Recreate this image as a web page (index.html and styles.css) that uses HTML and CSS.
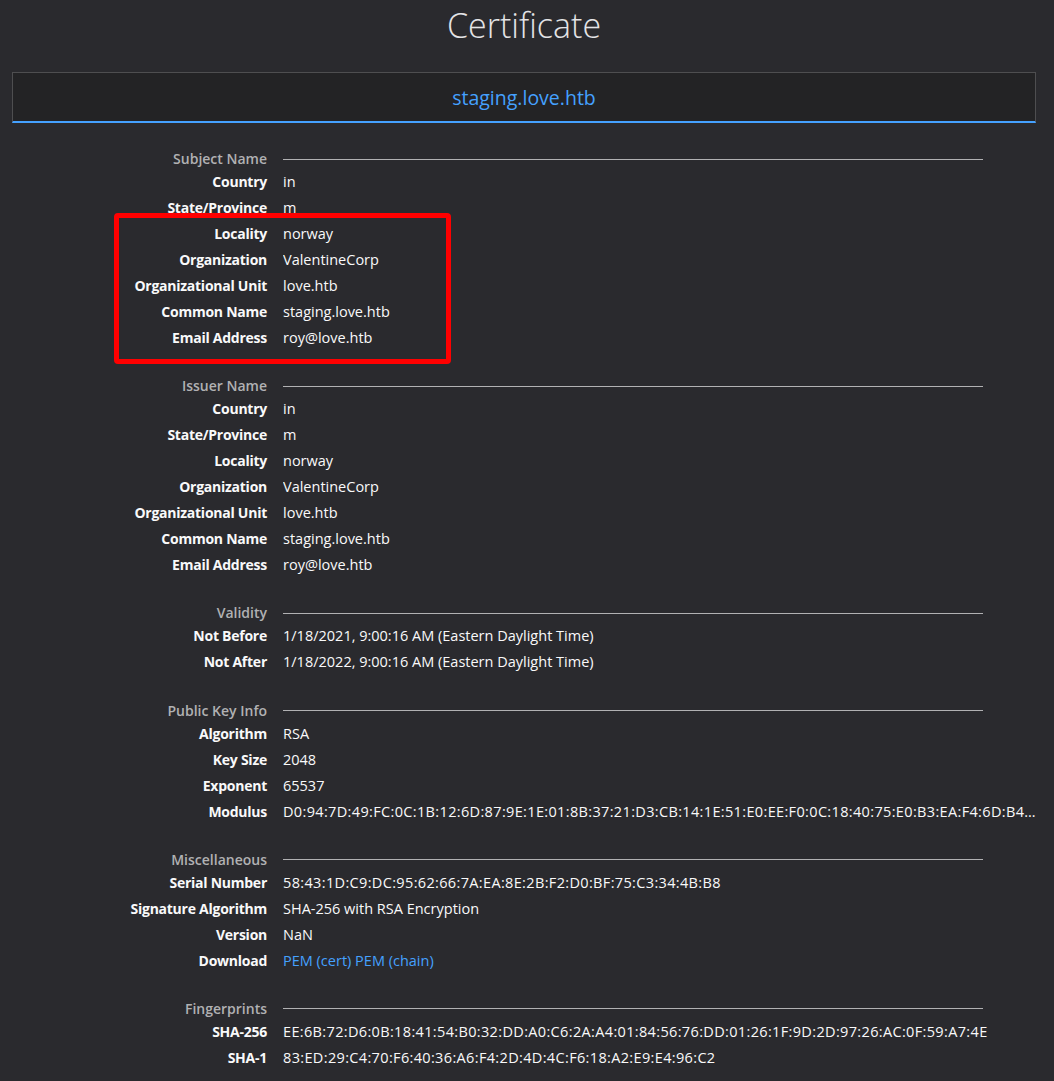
FILE: index.html
```html
<!DOCTYPE html>
<html lang="en">
<head>
<meta charset="utf-8">
<title>Certificate</title>
<link rel="stylesheet" href="styles.css">
</head>
<body>
<h1 class="page-title">Certificate</h1>
<div class="tabs">
  <span class="tab-label">staging.love.htb</span>
</div>

<div class="sections">
  <section class="info-group">
    <div class="group-title">Subject Name</div><div class="group-line"></div>
    <div class="label">Country</div><div class="value">in</div>
    <div class="label">State/Province</div><div class="value">m</div>
    <div class="label">Locality</div><div class="value">norway</div>
    <div class="label">Organization</div><div class="value">ValentineCorp</div>
    <div class="label">Organizational Unit</div><div class="value">love.htb</div>
    <div class="label">Common Name</div><div class="value">staging.love.htb</div>
    <div class="label">Email Address</div><div class="value">roy@love.htb</div>
  </section>

  <section class="info-group">
    <div class="group-title">Issuer Name</div><div class="group-line"></div>
    <div class="label">Country</div><div class="value">in</div>
    <div class="label">State/Province</div><div class="value">m</div>
    <div class="label">Locality</div><div class="value">norway</div>
    <div class="label">Organization</div><div class="value">ValentineCorp</div>
    <div class="label">Organizational Unit</div><div class="value">love.htb</div>
    <div class="label">Common Name</div><div class="value">staging.love.htb</div>
    <div class="label">Email Address</div><div class="value">roy@love.htb</div>
  </section>

  <section class="info-group">
    <div class="group-title">Validity</div><div class="group-line"></div>
    <div class="label">Not Before</div><div class="value">1/18/2021, 9:00:16 AM (Eastern Daylight Time)</div>
    <div class="label">Not After</div><div class="value">1/18/2022, 9:00:16 AM (Eastern Daylight Time)</div>
  </section>

  <section class="info-group">
    <div class="group-title">Public Key Info</div><div class="group-line"></div>
    <div class="label">Algorithm</div><div class="value">RSA</div>
    <div class="label">Key Size</div><div class="value">2048</div>
    <div class="label">Exponent</div><div class="value">65537</div>
    <div class="label">Modulus</div><div class="value hex">D0:94:7D:49:FC:0C:1B:12:6D:87:9E:1E:01:8B:37:21:D3:CB:14:1E:51:E0:EE:F0:0C:18:40:75:E0:B3:EA:F4:6D:B4…</div>
  </section>

  <section class="info-group">
    <div class="group-title">Miscellaneous</div><div class="group-line"></div>
    <div class="label">Serial Number</div><div class="value hex">58:43:1D:C9:DC:95:62:66:7A:EA:8E:2B:F2:D0:BF:75:C3:34:4B:B8</div>
    <div class="label">Signature Algorithm</div><div class="value">SHA-256 with RSA Encryption</div>
    <div class="label">Version</div><div class="value">NaN</div>
    <div class="label">Download</div><div class="value"><a class="link" href="#">PEM (cert)</a> <a class="link" href="#">PEM (chain)</a></div>
  </section>

  <section class="info-group">
    <div class="group-title">Fingerprints</div><div class="group-line"></div>
    <div class="label">SHA-256</div><div class="value hex">EE:6B:72:D6:0B:18:41:54:B0:32:DD:A0:C6:2A:A4:01:84:56:76:DD:01:26:1F:9D:2D:97:26:AC:0F:59:A7:4E</div>
    <div class="label">SHA-1</div><div class="value hex">83:ED:29:C4:70:F6:40:36:A6:F4:2D:4D:4C:F6:18:A2:E9:E4:96:C2</div>
  </section>
</div>

<div class="highlight"></div>
</body>
</html>
```

FILE: styles.css
```css
html, body {
  margin: 0;
  padding: 0;
  background: #2a2a2e;
}

body {
  position: relative;
  font-family: "Open Sans", "Noto Sans", sans-serif;
  font-size: 14.5px;
  color: #f9f9fa;
  width: 1054px;
  height: 1081px;
  overflow: hidden;
}

.page-title {
  margin: 0 18px 0 12px;
  height: 72px;
  line-height: 50px;
  text-align: center;
  font-family: "Open Sans", sans-serif;
  font-weight: 300;
  font-size: 34px;
  color: #e4e4e6;
}

.tabs {
  margin: 0 18px 0 12px;
  height: 48px;
  background: #232325;
  border: 1px solid #4e4e50;
  border-bottom: 2px solid #45a1ff;
  display: flex;
  align-items: center;
  justify-content: center;
}

.tab-label {
  color: #45a1ff;
  font-size: 19.5px;
}

.sections {
  margin: 26px 18px 0 12px;
  display: flex;
  flex-direction: column;
  gap: 25.2px;
}

.info-group {
  display: grid;
  grid-template-columns: 255px 1fr;
  grid-template-rows: 20px;
  grid-auto-rows: 26px;
  column-gap: 16px;
}

.group-title {
  text-align: right;
  color: #b1b1b3;
  font-size: 14px;
  font-weight: 600;
  line-height: 20px;
  white-space: nowrap;
}

.group-line {
  display: flex;
  align-items: center;
  margin-right: 53px;
}

.group-line::before {
  content: "";
  flex: 1;
  height: 1px;
  background: #b1b1b3;
}

.label {
  text-align: right;
  font-size: 14px;
  font-weight: 700;
  letter-spacing: -0.25px;
  line-height: 26px;
  white-space: nowrap;
}

.value {
  line-height: 26px;
  white-space: nowrap;
  overflow: hidden;
  text-overflow: ellipsis;
  min-width: 0;
}

.hex {
  letter-spacing: 0.35px;
}

.link {
  color: #45a1ff;
  text-decoration: none;
}

.highlight {
  position: absolute;
  left: 114px;
  top: 213px;
  width: 337px;
  height: 151px;
  box-sizing: border-box;
  border: 5px solid #ff0000;
  border-radius: 4px;
}
```
